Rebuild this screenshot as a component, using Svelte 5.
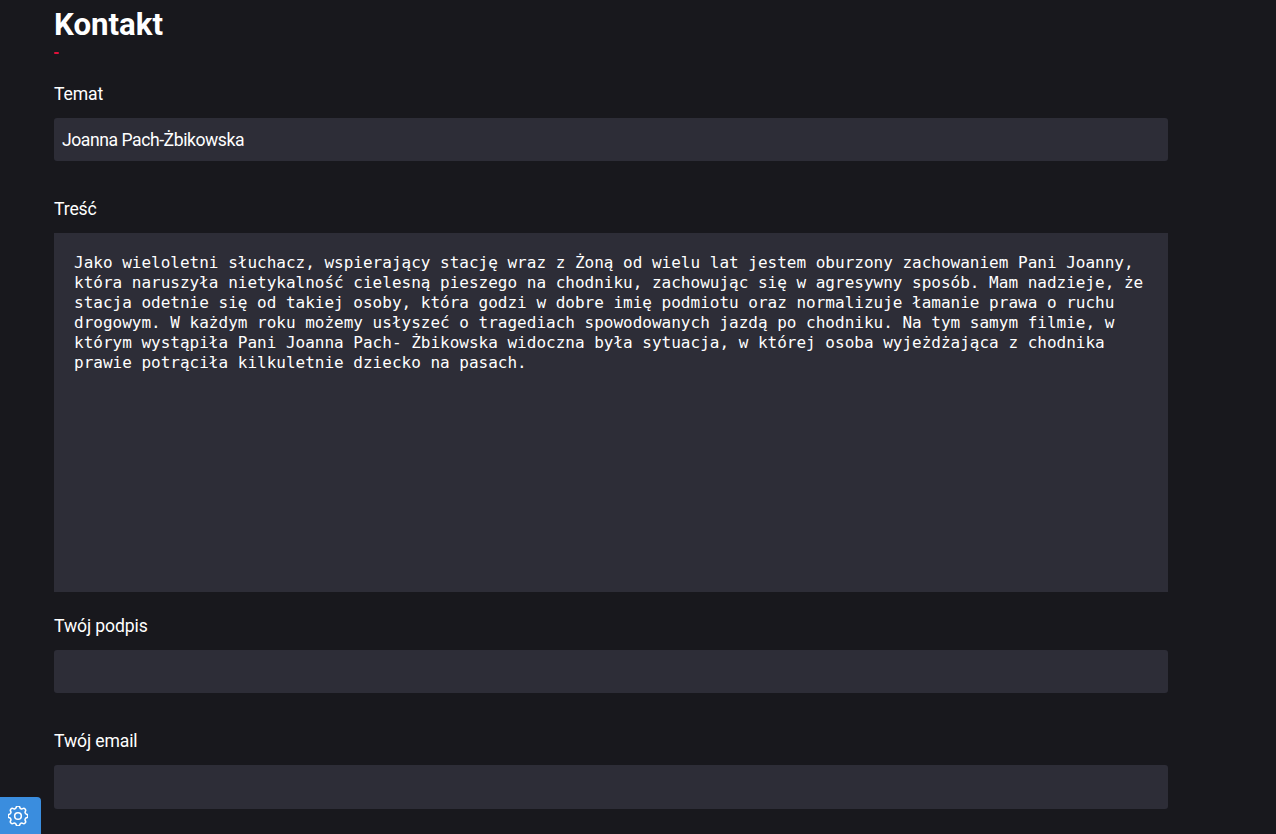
<script>
  let temat = 'Joanna Pach-Żbikowska';
  let tresc = 'Jako wieloletni słuchacz, wspierający stację wraz z Żoną od wielu lat jestem oburzony zachowaniem Pani Joanny, która naruszyła nietykalność cielesną pieszego na chodniku, zachowując się w agresywny sposób. Mam nadzieje, że stacja odetnie się od takiej osoby, która godzi w dobre imię podmiotu oraz normalizuje łamanie prawa o ruchu drogowym. W każdym roku możemy usłyszeć o tragediach spowodowanych jazdą po chodniku. Na tym samym filmie, w którym wystąpiła Pani Joanna Pach- Żbikowska widoczna była sytuacja, w której osoba wyjeżdżająca z chodnika prawie potrąciła kilkuletnie dziecko na pasach.';
</script>

<main class="page">
  <h1>Kontakt</h1>
  <div class="dash"></div>
  <form class="form">
    <label class="field">
      <span>Temat</span>
      <input type="text" bind:value={temat} />
    </label>
    <label class="field">
      <span>Treść</span>
      <textarea bind:value={tresc}></textarea>
    </label>
    <label class="field tight">
      <span>Twój podpis</span>
      <input type="text" />
    </label>
    <label class="field">
      <span>Twój email</span>
      <input class="last" type="email" />
    </label>
  </form>
</main>

<button class="settings" aria-label="Ustawienia">
  <svg viewBox="3 3 18 18" width="20" height="20" fill="none" stroke="#fff" stroke-width="1.4" stroke-linecap="round" stroke-linejoin="round">
    <path d="M10.33 4.32c.43-1.76 2.92-1.76 3.35 0a1.72 1.72 0 0 0 2.57 1.07c1.54-.94 3.3.82 2.37 2.37a1.72 1.72 0 0 0 1.06 2.57c1.76.43 1.76 2.92 0 3.35a1.72 1.72 0 0 0-1.07 2.57c.94 1.54-.82 3.3-2.37 2.37a1.72 1.72 0 0 0-2.57 1.06c-.43 1.76-2.92 1.76-3.35 0a1.72 1.72 0 0 0-2.57-1.07c-1.54.94-3.3-.82-2.37-2.37a1.72 1.72 0 0 0-1.06-2.57c-1.76-.43-1.76-2.92 0-3.35a1.72 1.72 0 0 0 1.07-2.57c-.94-1.54.82-3.3 2.37-2.37.99.61 2.29.07 2.57-1.06z"/>
    <circle cx="12" cy="12" r="3"/>
  </svg>
</button>

<style>
  :global(body) {
    background: #18181d;
    overflow: hidden;
  }
  .page {
    height: 834px;
    box-sizing: border-box;
    padding: 0 108px 0 54px;
    color: #fff;
    font-family: Roboto, sans-serif;
    overflow: hidden;
  }
  h1 {
    margin: 0;
    padding-top: 7px;
    font-size: 31.2px;
    line-height: 36px;
    font-weight: 700;
  }
  .dash {
    width: 5px;
    height: 2px;
    margin-top: 9px;
    border-radius: 1px;
    background: #e0103a;
  }
  .form {
    display: flex;
    flex-direction: column;
    margin-top: 30px;
    gap: 38px;
  }
  .field {
    display: flex;
    flex-direction: column;
    gap: 13px;
  }
  .tight { margin-top: -14px; }
  .field span {
    font-size: 17.6px;
    line-height: 21px;
    font-weight: 400;
    letter-spacing: -0.12px;
  }
  input, textarea {
    display: block;
    width: 100%;
    box-sizing: border-box;
    border: 0;
    outline: 0;
    background: #2d2d37;
    color: #fff;
    margin: 0;
  }
  input {
    height: 43px;
    padding: 0 8px;
    border-radius: 3px;
    font-family: Roboto, sans-serif;
    font-size: 17.6px;
    letter-spacing: -0.45px;
  }
  input.last { height: 44px; }
  textarea {
    height: 359px;
    padding: 20px;
    resize: none;
    font-family: "DejaVu Sans Mono", monospace;
    font-size: 16px;
    line-height: 20px;
  }
  .settings {
    position: fixed;
    left: 0;
    bottom: 0;
    width: 41px;
    height: 37px;
    padding: 0 5px 0 0;
    border: 0;
    border-top-right-radius: 4px;
    background: #3a8dde;
    display: flex;
    align-items: center;
    justify-content: center;
  }
</style>
